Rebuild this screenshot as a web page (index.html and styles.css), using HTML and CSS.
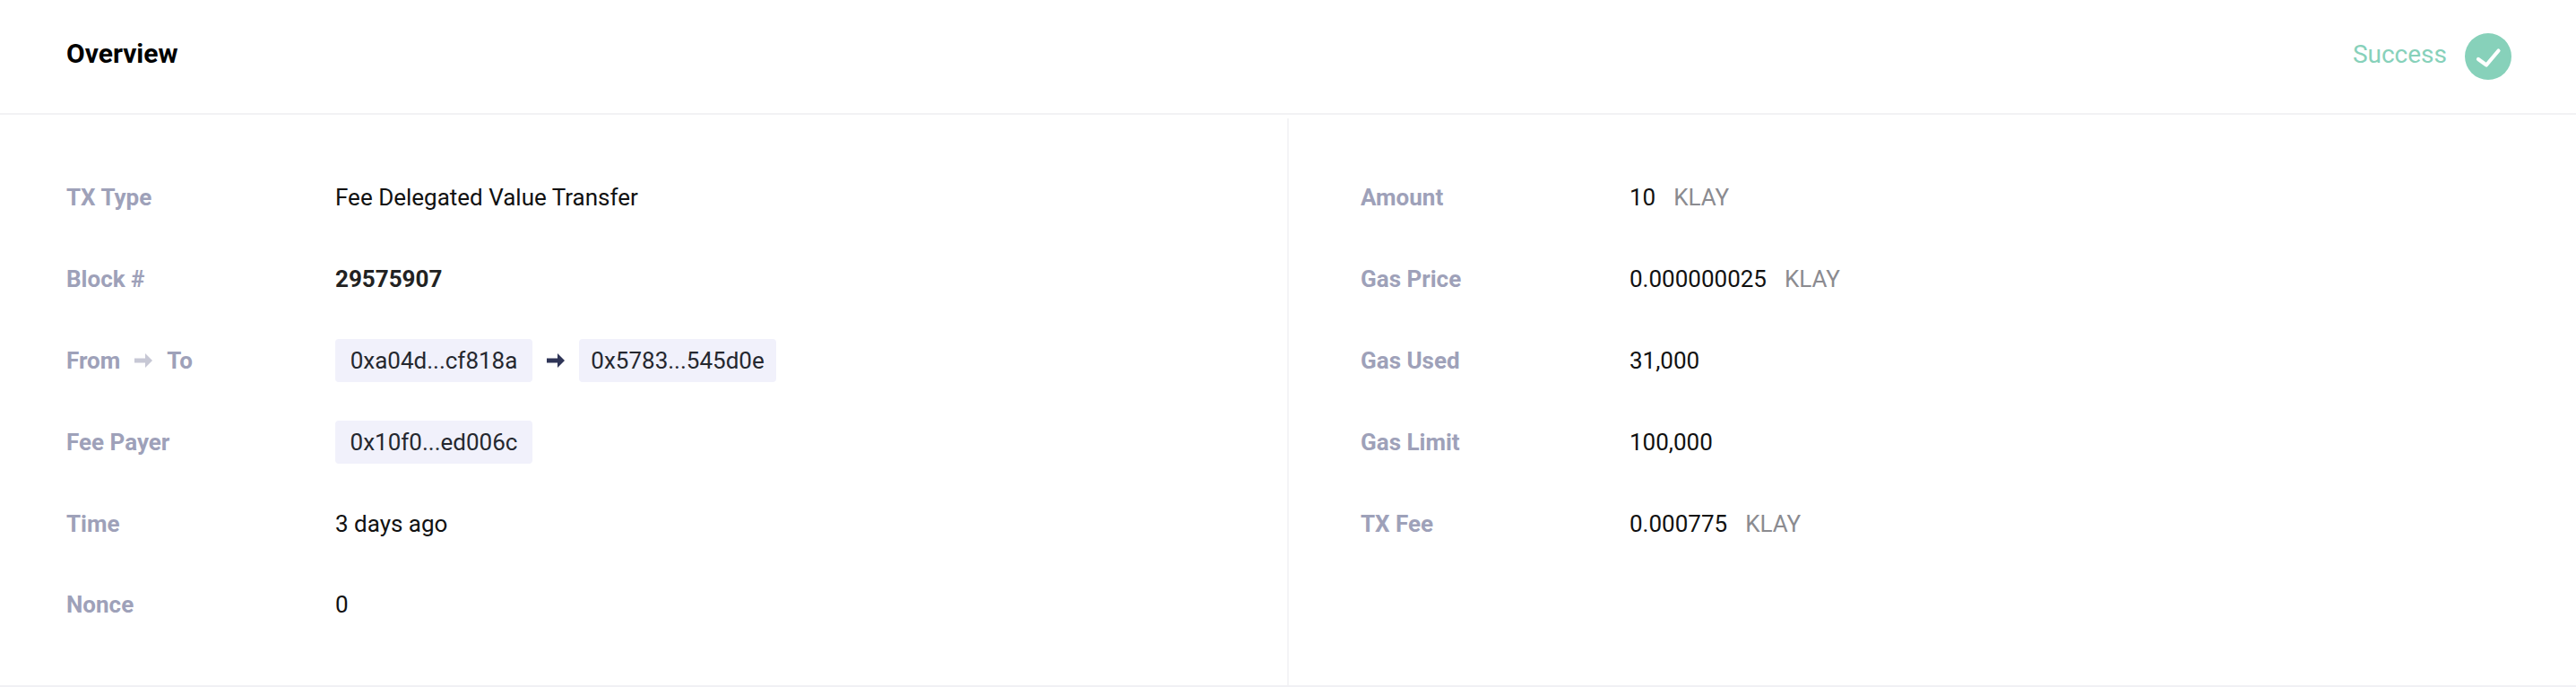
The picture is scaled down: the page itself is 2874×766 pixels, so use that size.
FILE: index.html
```html
<!DOCTYPE html>
<html lang="en">

<head>
    <meta charset="UTF-8">
    <title>Transaction Overview</title>
    <link rel="stylesheet" href="styles.css">
</head>

<body>
    <section class="overview">
        <header class="overview-head">
            <h2>Overview</h2>
            <div class="status">
                <span class="status-text">Success</span>
                <svg class="status-icon" viewBox="0 0 52 52">
                    <circle cx="26" cy="26" r="26" fill="#87d1ba"/>
                    <path d="M15 29l9 6.5L37.5 19.5" fill="none" stroke="#fff" stroke-width="4.2" stroke-linecap="round" stroke-linejoin="round"/>
                </svg>
            </div>
        </header>
        <div class="overview-body">
            <div class="col">
                <div class="row">
                    <div class="label">TX Type</div>
                    <div class="value">Fee Delegated Value Transfer</div>
                </div>
                <div class="row">
                    <div class="label">Block #</div>
                    <div class="value block-no">29575907</div>
                </div>
                <div class="row">
                    <div class="label">From
                        <svg class="arrow" viewBox="0 0 20 16"><path d="M0 5.5h12V0l8 8-8 8v-5.5H0z" fill="#c7c8d5"/></svg>
                        To
                    </div>
                    <div class="value">
                        <span class="chip">0xa04d...cf818a</span>
                        <svg class="arrow" viewBox="0 0 20 16"><path d="M0 5.5h12V0l8 8-8 8v-5.5H0z" fill="#2f3557"/></svg>
                        <span class="chip">0x5783...545d0e</span>
                    </div>
                </div>
                <div class="row">
                    <div class="label">Fee Payer</div>
                    <div class="value"><span class="chip">0x10f0...ed006c</span></div>
                </div>
                <div class="row">
                    <div class="label">Time</div>
                    <div class="value">3 days ago</div>
                </div>
                <div class="row">
                    <div class="label">Nonce</div>
                    <div class="value">0</div>
                </div>
            </div>
            <div class="col col-right">
                <div class="row">
                    <div class="label">Amount</div>
                    <div class="value">10 <span class="unit">KLAY</span></div>
                </div>
                <div class="row">
                    <div class="label">Gas Price</div>
                    <div class="value">0.000000025 <span class="unit">KLAY</span></div>
                </div>
                <div class="row">
                    <div class="label">Gas Used</div>
                    <div class="value">31,000</div>
                </div>
                <div class="row">
                    <div class="label">Gas Limit</div>
                    <div class="value">100,000</div>
                </div>
                <div class="row">
                    <div class="label">TX Fee</div>
                    <div class="value">0.000775 <span class="unit">KLAY</span></div>
                </div>
            </div>
        </div>
    </section>
</body>

</html>
```

FILE: styles.css
```css
body {
    margin: 0;
    background-color: #fff;
    font-family: Roboto, Arial, sans-serif;
    font-size: 26px;
    color: #111;
}

.overview {
    height: 766px;
    box-sizing: border-box;
    border-bottom: 2px solid #f0f0f4;
}

.overview-head {
    display: flex;
    justify-content: space-between;
    align-items: center;
    height: 126px;
    padding: 0 72px 0 74px;
    border-bottom: 2px solid #f2f2f4;
}

.overview-head h2 {
    margin: 0 0 7px;
    font-size: 30px;
    font-weight: 700;
    color: #000;
}

.status {
    display: flex;
    align-items: center;
    gap: 20px;
    color: #87d1ba;
    font-size: 28px;
}

.status-text {
    margin-bottom: 5px;
}

.status-icon {
    width: 52px;
    height: 52px;
}

.overview-body {
    display: flex;
    padding-top: 4px;
}

.col {
    width: 1436px;
    box-sizing: border-box;
    padding: 43px 0 0 74px;
}

.col-right {
    width: 1438px;
    padding-left: 80px;
    border-left: 2px solid #f4f4f6;
    height: 632px;
}

.row {
    display: flex;
    align-items: center;
    height: 90.8px;
}

.label {
    display: flex;
    align-items: center;
    gap: 16px;
    width: 300px;
    font-weight: 700;
    color: #9ea1b9;
}

.value {
    display: flex;
    align-items: center;
}

.block-no {
    font-weight: 700;
    color: #222;
}

.chip {
    display: flex;
    align-items: center;
    justify-content: center;
    width: 220px;
    height: 48px;
    border-radius: 4px;
    background-color: #f1f1fb;
    color: #25282f;
}

.arrow {
    width: 20px;
    height: 16px;
}

.value .arrow {
    margin: 0 16px;
}

.unit {
    margin-left: 20px;
    color: #8b8b90;
}
```
